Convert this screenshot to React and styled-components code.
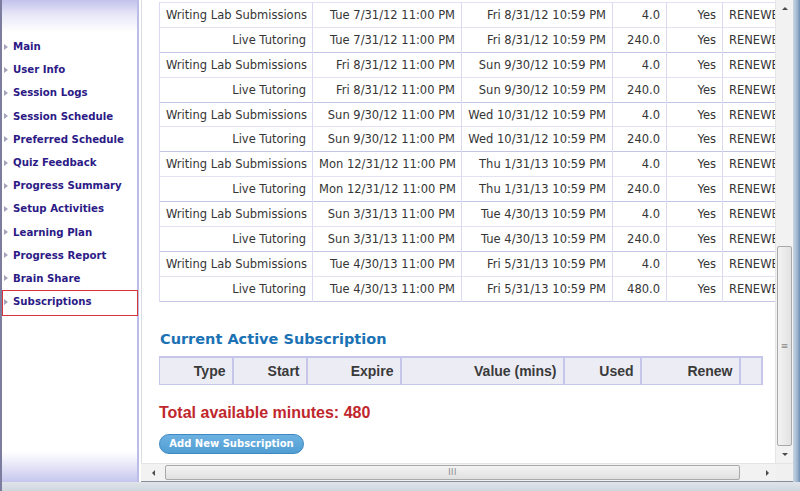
import React from "react";
import styled, { createGlobalStyle } from "styled-components";

const GlobalStyle = createGlobalStyle`
    html, body {
        margin: 0;
        padding: 0;
        overflow: hidden;
        background: #fff;
    }
`

const navItems = [
    "Main", "User Info", "Session Logs", "Session Schedule", "Preferred Schedule",
    "Quiz Feedback", "Progress Summary", "Setup Activities", "Learning Plan",
    "Progress Report", "Brain Share", "Subscriptions"
]

const history = [
    ["Writing Lab Submissions", "Tue 7/31/12 11:00 PM", "Fri 8/31/12 10:59 PM", "4.0"],
    ["Live Tutoring", "Tue 7/31/12 11:00 PM", "Fri 8/31/12 10:59 PM", "240.0"],
    ["Writing Lab Submissions", "Fri 8/31/12 11:00 PM", "Sun 9/30/12 10:59 PM", "4.0"],
    ["Live Tutoring", "Fri 8/31/12 11:00 PM", "Sun 9/30/12 10:59 PM", "240.0"],
    ["Writing Lab Submissions", "Sun 9/30/12 11:00 PM", "Wed 10/31/12 10:59 PM", "4.0"],
    ["Live Tutoring", "Sun 9/30/12 11:00 PM", "Wed 10/31/12 10:59 PM", "240.0"],
    ["Writing Lab Submissions", "Mon 12/31/12 11:00 PM", "Thu 1/31/13 10:59 PM", "4.0"],
    ["Live Tutoring", "Mon 12/31/12 11:00 PM", "Thu 1/31/13 10:59 PM", "240.0"],
    ["Writing Lab Submissions", "Sun 3/31/13 11:00 PM", "Tue 4/30/13 10:59 PM", "4.0"],
    ["Live Tutoring", "Sun 3/31/13 11:00 PM", "Tue 4/30/13 10:59 PM", "240.0"],
    ["Writing Lab Submissions", "Tue 4/30/13 11:00 PM", "Fri 5/31/13 10:59 PM", "4.0"],
    ["Live Tutoring", "Tue 4/30/13 11:00 PM", "Fri 5/31/13 10:59 PM", "480.0"],
]

const activeCols = [
    { label: "Type", w: 73 },
    { label: "Start", w: 74 },
    { label: "Expire", w: 94 },
    { label: "Value (mins)", w: 163 },
    { label: "Used", w: 77 },
    { label: "Renew", w: 99 },
    { label: "", w: 22 },
]

const Window = styled.div`
    width: 800px;
    height: 491px;
    display: flex;
    flex-direction: column;
    overflow: hidden;
`
const Body = styled.div`
    flex: 1;
    display: flex;
    min-height: 0;
`
const Sidebar = styled.div`
    width: 135px;
    flex-shrink: 0;
    border-left: 2px solid #7c7c9e;
    border-right: 2px solid #bcbce8;
    background: linear-gradient(to bottom, #c2c2ec 0, #e6e6f8 14px, #ffffff 32px, #ffffff calc(100% - 30px), #c6c6ee 100%);
`
const NavList = styled.ul`
    list-style: none;
    margin: 0;
    padding: 35px 0 0 0;
`
const NavItem = styled.li`
    position: relative;
    height: 23.2px;
    display: flex;
    align-items: center;
    padding-left: 2px;
    font-family: "DejaVu Sans", Verdana, sans-serif;
    font-weight: bold;
    font-size: 10.2px;
    color: #2c1a86;
    &::before {
        content: "";
        width: 0;
        height: 0;
        border-left: 4px solid #a4a4bc;
        border-top: 3.5px solid transparent;
        border-bottom: 3.5px solid transparent;
        margin-right: 5px;
    }
    ${props => props.active && `
        &::after {
            content: "";
            position: absolute;
            left: 0;
            right: -1px;
            top: 0;
            bottom: -3px;
            border: 1.5px solid #d8343a;
        }
    `}
`
const Frame = styled.div`
    flex: 1;
    display: flex;
    flex-direction: column;
    min-width: 0;
    padding-left: 2px;
`
const Viewport = styled.div`
    flex: 1;
    display: flex;
    min-height: 0;
    border-left: 1px solid #dcdce6;
`
const Main = styled.div`
    flex: 1;
    overflow: hidden;
    padding: 2px 0 0 17px;
    min-width: 0;
`
const HistoryTable = styled.table`
    border-collapse: collapse;
    table-layout: fixed;
    width: 660px;
    font-family: "DejaVu Sans", Verdana, sans-serif;
    font-size: 11.5px;
    color: #353535;
    border-top: 1px solid #c8c8ea;
`
const Row = styled.tr`
    height: 24.9px;
    border-top: 1px solid ${props => props.group ? "#c4c4e6" : "#e2e2f4"};
    &:last-child {
        border-bottom: 1px solid #c4c4e6;
    }
`
const Cell = styled.td`
    padding: 0 6px;
    text-align: ${props => props.left ? "left" : "right"};
    white-space: nowrap;
    overflow: hidden;
    border-left: 1px solid #dadaf2;
`
const Heading = styled.h2`
    margin: 29px 0 0 1px;
    font-family: "DejaVu Sans", Verdana, sans-serif;
    font-size: 14.5px;
    line-height: 17px;
    color: #1b72b4;
`
const ActiveTable = styled.table`
    margin-top: 8px;
    border-collapse: collapse;
    table-layout: fixed;
    width: 603px;
    font-family: "Liberation Sans", Arial, sans-serif;
    font-size: 14px;
    color: #3a3a3a;
`
const HeadCell = styled.th`
    height: 26px;
    padding: 0 6px;
    text-align: right;
    font-weight: bold;
    background: #ececf5;
    border: 1px solid #c6c6ea;
    border-right-width: 2px;
    border-top-width: 2px;
`
const Total = styled.div`
    margin-top: 18px;
    font-family: "Liberation Sans", Arial, sans-serif;
    font-weight: bold;
    font-size: 16px;
    line-height: 19px;
    color: #c0272d;
`
const AddButton = styled.button`
    margin-top: 12px;
    width: 145px;
    height: 20px;
    padding: 0;
    border: 1px solid #3f88c2;
    border-radius: 10px;
    background: linear-gradient(to bottom, #6cb2e2, #519dd2);
    color: #fff;
    font-family: "DejaVu Sans", Verdana, sans-serif;
    font-weight: bold;
    font-size: 10px;
`
const VScroll = styled.div`
    width: 17px;
    flex-shrink: 0;
    display: flex;
    flex-direction: column;
    background: #f2f2f2;
    border-left: 1px solid #e6e6e6;
`
const ArrowBtn = styled.div`
    width: 17px;
    height: 17px;
    flex-shrink: 0;
    display: flex;
    align-items: center;
    justify-content: center;
    &::before {
        content: "";
        width: 0;
        height: 0;
        ${props => props.dir === "up" && `border-bottom: 3px solid #4a4a4a; border-left: 3px solid transparent; border-right: 3px solid transparent;`}
        ${props => props.dir === "down" && `border-top: 3px solid #4a4a4a; border-left: 3px solid transparent; border-right: 3px solid transparent;`}
        ${props => props.dir === "left" && `border-right: 3px solid #4a4a4a; border-top: 3px solid transparent; border-bottom: 3px solid transparent;`}
        ${props => props.dir === "right" && `border-left: 3px solid #4a4a4a; border-top: 3px solid transparent; border-bottom: 3px solid transparent;`}
    }
`
const VTrack = styled.div`
    flex: 1;
    display: flex;
    flex-direction: column;
    justify-content: flex-end;
`
const VThumb = styled.div`
    height: 198px;
    margin: 0 1px 0 1px;
    border: 1px solid #a9a9a9;
    border-radius: 2px;
    background: linear-gradient(to right, #f3f3f3, #e2e2e2);
    display: flex;
    align-items: center;
    justify-content: center;
    font-size: 9px;
    color: #8a8a8a;
    font-family: "DejaVu Sans", sans-serif;
`
const HScroll = styled.div`
    height: 17px;
    display: flex;
    background: #f2f2f2;
    border-top: 1px solid #e4e4e4;
    border-bottom: 1px solid #858f9a;
    padding-left: 4px;
`
const HTrack = styled.div`
    flex: 1;
    display: flex;
    padding: 0 19px 0 3px;
`
const HThumb = styled.div`
    flex: 1;
    margin: 1px 0;
    border: 1px solid #a9a9a9;
    border-radius: 2px;
    background: linear-gradient(to bottom, #f3f3f3, #e0e0e0);
    display: flex;
    align-items: center;
    justify-content: center;
    font-size: 8px;
    letter-spacing: 0.5px;
    color: #888;
    font-family: "DejaVu Sans", sans-serif;
`
const Corner = styled.div`
    width: 17px;
    flex-shrink: 0;
    background: #f0f0f0;
`
const RightEdge = styled.div`
    width: 7px;
    flex-shrink: 0;
    background: linear-gradient(to right, #c9d6e3, #9fb6cf 60%, #6f8fb3);
`
const BottomEdge = styled.div`
    height: 9px;
    flex-shrink: 0;
    background: linear-gradient(to bottom, #dfe4ea, #cfd6de);
    border-left: 2px solid #7c7c9e;
`

const App = () => {
    return (
        <Window>
            <GlobalStyle />
            <Body>
                <Sidebar>
                    <NavList>
                        {navItems.map(name => (
                            <NavItem key={name} active={name === "Subscriptions" ? 1 : 0}>{name}</NavItem>
                        ))}
                    </NavList>
                </Sidebar>
                <Frame>
                    <Viewport>
                        <Main>
                            <HistoryTable>
                                <colgroup>
                                    <col style={{ width: 153 }} />
                                    <col style={{ width: 149 }} />
                                    <col style={{ width: 151 }} />
                                    <col style={{ width: 54 }} />
                                    <col style={{ width: 56 }} />
                                    <col style={{ width: 97 }} />
                                </colgroup>
                                <tbody>
                                    {history.map((r, i) => (
                                        <Row key={i} group={i % 2 === 0 && i > 0 ? 1 : 0}>
                                            <Cell>{r[0]}</Cell>
                                            <Cell>{r[1]}</Cell>
                                            <Cell>{r[2]}</Cell>
                                            <Cell>{r[3]}</Cell>
                                            <Cell>Yes</Cell>
                                            <Cell left>RENEWED</Cell>
                                        </Row>
                                    ))}
                                </tbody>
                            </HistoryTable>
                            <Heading>Current Active Subscription</Heading>
                            <ActiveTable>
                                <colgroup>
                                    {activeCols.map((c, i) => <col key={i} style={{ width: c.w }} />)}
                                </colgroup>
                                <thead>
                                    <tr>
                                        {activeCols.map((c, i) => <HeadCell key={i}>{c.label}</HeadCell>)}
                                    </tr>
                                </thead>
                            </ActiveTable>
                            <Total>Total available minutes: 480</Total>
                            <AddButton>Add New Subscription</AddButton>
                        </Main>
                        <VScroll>
                            <ArrowBtn dir="up" />
                            <VTrack>
                                <VThumb>≡</VThumb>
                            </VTrack>
                            <ArrowBtn dir="down" />
                        </VScroll>
                    </Viewport>
                    <HScroll>
                        <ArrowBtn dir="left" />
                        <HTrack>
                            <HThumb>III</HThumb>
                        </HTrack>
                        <ArrowBtn dir="right" />
                        <Corner />
                    </HScroll>
                </Frame>
                <RightEdge />
            </Body>
            <BottomEdge />
        </Window>
    )
}

export default App;
